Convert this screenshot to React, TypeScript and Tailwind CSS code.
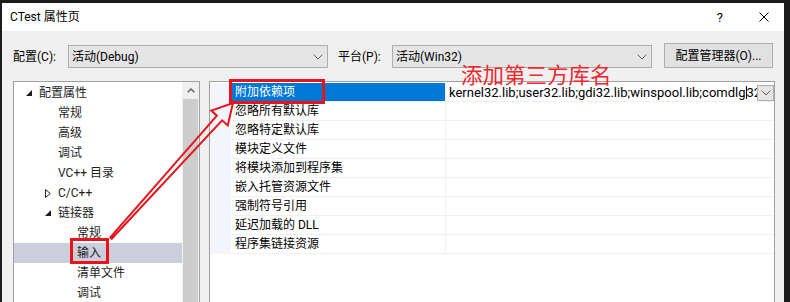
import React from "react";

const Chevron = ({ className = "" }: { className?: string }) => (
  <svg width="10" height="6" viewBox="0 0 10 6" className={className}>
    <path d="M0.5 0.5 L5 5 L9.5 0.5" fill="none" stroke="#606060" strokeWidth="1" />
  </svg>
);

type TreeItem = { level: number; tri?: "open" | "closed"; text: string; selected?: boolean };

const tree: TreeItem[] = [
  { level: 0, tri: "open", text: "配置属性" },
  { level: 1, text: "常规" },
  { level: 1, text: "高级" },
  { level: 1, text: "调试" },
  { level: 1, text: "VC++ 目录" },
  { level: 1, tri: "closed", text: "C/C++" },
  { level: 1, tri: "open", text: "链接器" },
  { level: 2, text: "常规" },
  { level: 2, text: "输入", selected: true },
  { level: 2, text: "清单文件" },
  { level: 2, text: "调试" },
];

const indent = ["pl-[11px]", "pl-[30px]", "pl-[49px]"];

const props = [
  "附加依赖项",
  "忽略所有默认库",
  "忽略特定默认库",
  "模块定义文件",
  "将模块添加到程序集",
  "嵌入托管资源文件",
  "强制符号引用",
  "延迟加载的 DLL",
  "程序集链接资源",
];

export default function App() {
  return (
    <div className="relative w-[790px] h-[302px] overflow-hidden bg-[#1c1c1c] pt-[3px] pl-[2px] pr-[6px] font-['Roboto','Noto_Sans_CJK_SC',sans-serif] text-[12px] text-black">
      <div className="flex flex-col h-full">
        {/* Title bar */}
        <div className="h-[28px] bg-white flex items-center pl-[8px] pr-[15px] shrink-0">
          <span className="text-[12px] leading-none">CTest 属性页</span>
          <span className="ml-auto text-[13px] leading-none">?</span>
          <svg width="10" height="10" viewBox="0 0 10 10" className="ml-[36px]">
            <path d="M0.5 0.5 L9.5 9.5 M9.5 0.5 L0.5 9.5" stroke="#000" strokeWidth="1" />
          </svg>
        </div>

        {/* Body */}
        <div className="flex-1 bg-[#f0f0f0] flex flex-col">
          {/* Toolbar */}
          <div className="flex items-end pt-[12px] pl-[11px]">
            <div className="w-[55px] h-[23px] flex items-center">配置(C):</div>
            <div className="w-[260px] h-[23px] bg-[#e5e5e5] border border-[#adadad] flex items-center pl-[3px] pr-[4px]">
              <span>活动(Debug)</span>
              <Chevron className="ml-auto" />
            </div>
            <div className="w-[54px] h-[23px] flex items-center ml-[10px]">平台(P):</div>
            <div className="w-[260px] h-[23px] bg-[#e5e5e5] border border-[#adadad] flex items-center pl-[3px] pr-[4px]">
              <span>活动(Win32)</span>
              <Chevron className="ml-auto" />
            </div>
            <div className="w-[109px] h-[25px] ml-[12px] bg-[#e1e1e1] border border-[#adadad] flex items-center justify-center">
              配置管理器(O)...
            </div>
          </div>

          {/* Panels */}
          <div className="flex mt-[13px] pl-[11px]">
            {/* Tree */}
            <div className="w-[187px] h-[240px] border border-[#a0a0a0] bg-white flex">
              <div className="flex-1 pt-[1px] text-[#1e1e1e]">
                {tree.map((t, i) => (
                  <div
                    key={i}
                    className={`h-[20px] flex items-center ${indent[t.level]} ${t.selected ? "bg-[#cccedb]" : ""}`}
                  >
                    <div className="w-[14px] h-[20px] flex items-center">
                      {t.tri === "open" && (
                        <svg width="6" height="6" viewBox="0 0 6 6" className="ml-[1px]">
                          <polygon points="6,0 6,6 0,6" fill="#1e1e1e" />
                        </svg>
                      )}
                      {t.tri === "closed" && (
                        <svg width="6" height="9" viewBox="0 0 6 9" className="ml-[1px]">
                          <polygon points="0.5,0.5 5.3,4.5 0.5,8.5" fill="none" stroke="#1e1e1e" strokeWidth="1" />
                        </svg>
                      )}
                    </div>
                    <span className="leading-none">{t.text}</span>
                  </div>
                ))}
              </div>
              {/* Scrollbar */}
              <div className="w-[17px] bg-[#f0f0f0] flex flex-col">
                <div className="h-[17px] flex items-center justify-center">
                  <svg width="8" height="5" viewBox="0 0 8 5">
                    <path d="M0.7 4.3 L4 1 L7.3 4.3" fill="none" stroke="#606060" strokeWidth="1.4" />
                  </svg>
                </div>
                <div className="flex-1 bg-[#cdcdcd] mx-[1px]" />
              </div>
            </div>

            {/* Property grid */}
            <div className="w-[566px] h-[240px] ml-[9px] border border-[#a0a0a0] bg-white pt-[1px]">
              {props.map((p, i) => (
                <div key={i} className="flex h-[19px]">
                  <div className="w-[21px] bg-[#f3f5fb]" />
                  {i === 0 ? (
                    <>
                      <div className="w-[214px] bg-[#0078d7] text-white flex items-center pl-[4px] border-b border-[#f0f0f0]">
                        <span className="leading-none">{p}</span>
                      </div>
                      <div className="flex-1 min-w-0 flex items-end border-l border-[#f0f0f0] border-b">
                        <div className="flex-1 min-w-0 h-[18px] flex items-center pl-[3px] overflow-hidden whitespace-nowrap text-[13px]">
                          <span className="leading-none">kernel32.lib;user32.lib;gdi32.lib;winspool.lib;comdlg</span>
                          <span className="inline-block w-[1px] h-[13px] bg-black shrink-0" />
                          <span className="leading-none">32</span>
                        </div>
                        <div className="w-[17px] h-[16px] shrink-0 bg-[#e5e5e5] border border-[#adadad] flex items-center justify-center">
                          <Chevron />
                        </div>
                      </div>
                    </>
                  ) : (
                    <>
                      <div className="w-[214px] flex items-center pl-[4px] border-b border-[#f0f0f0]">
                        <span className="leading-none">{p}</span>
                      </div>
                      <div className="flex-1 border-l border-b border-[#f0f0f0]" />
                    </>
                  )}
                </div>
              ))}
            </div>
          </div>
        </div>
      </div>

      {/* Annotations */}
      <div className="absolute left-[70px] top-[238px] w-[39px] h-[26px] border-[3px] border-[#e8141c]" />
      <div className="absolute left-[229px] top-[79px] w-[96px] h-[25px] border-[3px] border-[#e8141c]" />
      <div className="absolute left-[461px] top-[64px] text-[21.5px] leading-[20px] text-[#f0282e] font-['Noto_Sans_CJK_SC',sans-serif]">
        添加第三方库名
      </div>
      <svg className="absolute left-0 top-0" width="790" height="302" viewBox="0 0 790 302">
        <polygon
          points="110.3,237.3 216.9,115.7 211.3,110.6 233,103 227.7,125.4 222.1,120.3 111.7,238.7"
          fill="none"
          stroke="#e8141c"
          strokeWidth="2"
          strokeLinejoin="miter"
        />
      </svg>
    </div>
  );
}
